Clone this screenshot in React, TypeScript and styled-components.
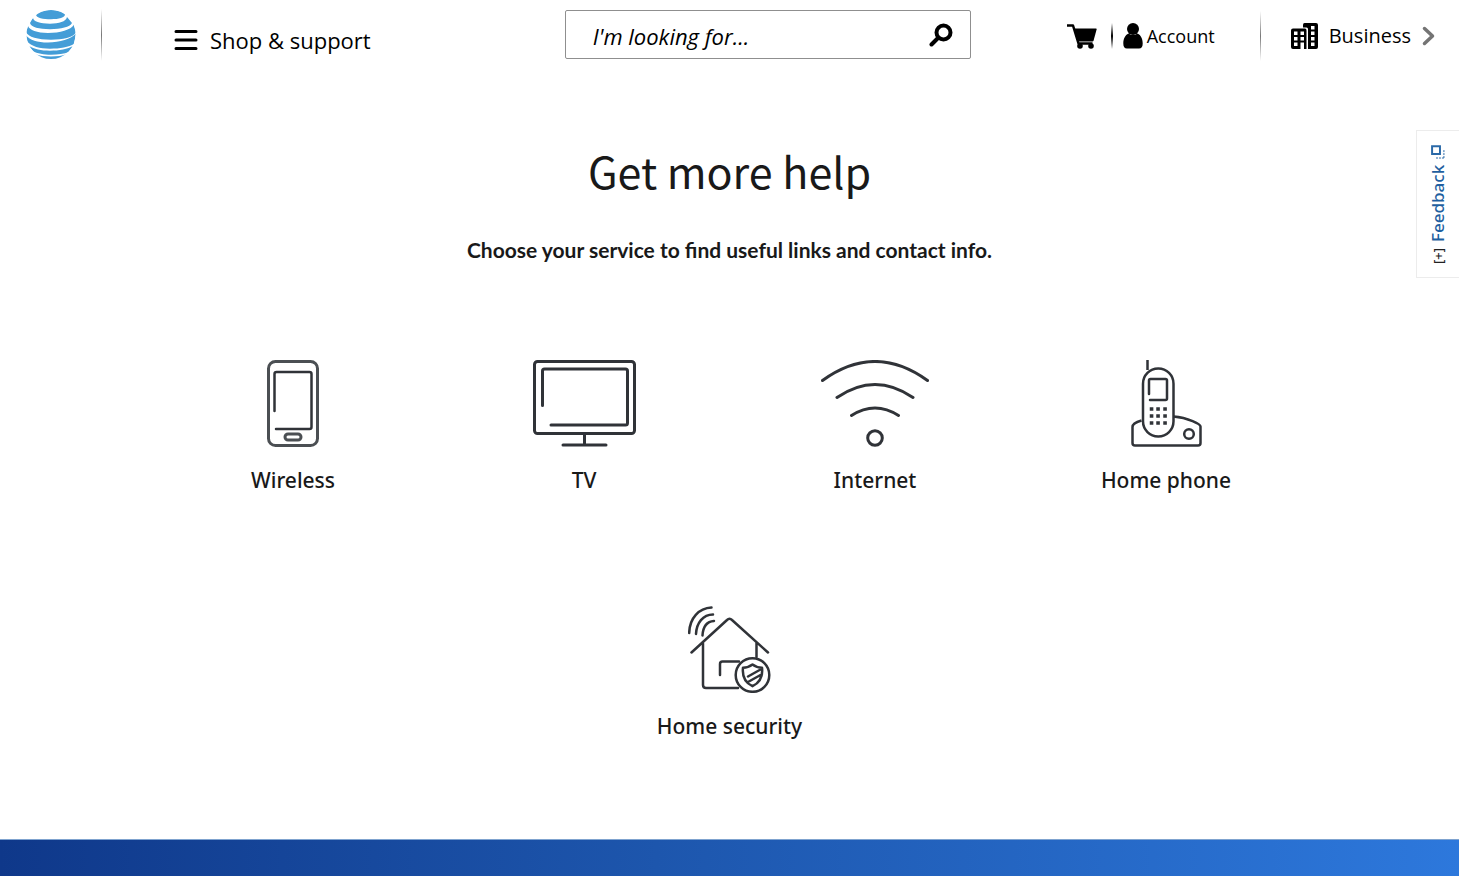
import React from "react";
import styled, { createGlobalStyle } from "styled-components";

const GlobalStyle = createGlobalStyle`
  *, *::before, *::after { box-sizing: border-box; }
  body {
    margin: 0;
    background: #fff;
    color: #191919;
    font-family: "Noto Sans", "Open Sans", sans-serif;
  }
`;

const Page = styled.div`
  position: relative;
  display: flex;
  flex-direction: column;
  min-height: 100vh;
  overflow: hidden;
`;

const Header = styled.header`
  display: flex;
  align-items: flex-start;
  height: 72px;
  padding: 10px 24px 0 26px;
  color: #000;
`;

const HeaderStart = styled.div`
  display: flex;
  flex: 1;
  align-items: center;
  height: 49px;
`;

const HeaderEnd = styled.div`
  display: flex;
  align-items: center;
  height: 52px;
  margin-left: 95px;
`;

const LogoLink = styled.a`
  display: flex;
  margin-right: 25px;
`;

const Divider = styled.span<{ $height: number; $width?: number; $color: string }>`
  width: ${(p) => p.$width ?? 1}px;
  height: ${(p) => p.$height}px;
  background: linear-gradient(transparent, ${(p) => p.$color} 50%, transparent);
`;

const MenuButton = styled.button`
  display: flex;
  align-items: center;
  gap: 12px;
  margin-left: 72px;
  padding: 10px 0 0;
  border: 0;
  background: none;
  color: inherit;
  font: 400 22px/32px "Open Sans", sans-serif;
  cursor: pointer;
`;

const SearchForm = styled.form`
  display: flex;
  align-items: center;
  flex: 0 1 406px;
  height: 49px;
  padding: 0 17px 0 27px;
  border: 1px solid #8f8f8f;
  border-radius: 2px;
`;

const SearchInput = styled.input`
  flex: 1;
  min-width: 0;
  padding: 2px 0 0;
  border: 0;
  outline: 0;
  background: none;
  color: #000;
  font: italic 400 22px/32px "Open Sans", sans-serif;

  &::placeholder { color: #000; opacity: 1; }
`;

const IconButton = styled.button`
  display: flex;
  padding: 0;
  border: 0;
  background: none;
  color: #000;
  cursor: pointer;
`;

const NavLink = styled.a<{ $size: number; $gap: number }>`
  display: flex;
  align-items: center;
  gap: ${(p) => p.$gap}px;
  color: #000;
  font-family: "Open Sans", sans-serif;
  font-size: ${(p) => p.$size}px;
  font-weight: 400;
  line-height: 28px;
  text-decoration: none;
  white-space: nowrap;
`;

const AccountGroup = styled.div`
  display: flex;
  align-items: center;
  gap: 10px;
  margin-right: 45px;
`;

const CartButton = styled(IconButton)`
  margin-right: 4px;
`;

const BusinessGroup = styled.div`
  margin-left: 30px;
`;

const Main = styled.main`
  flex: 1;
  padding-top: 66px;
  padding-bottom: 90px;
  text-align: center;
`;

const Title = styled.h1`
  margin: 0;
  font-family: "Noto Sans CJK JP", sans-serif;
  font-size: 43px;
  font-weight: 400;
  line-height: 64px;
`;

const Subtitle = styled.p`
  margin: 32px 0 0;
  font-family: Lato, sans-serif;
  font-size: 21px;
  font-weight: 700;
  line-height: 32px;
`;

const ServiceList = styled.ul`
  display: flex;
  flex-wrap: wrap;
  justify-content: center;
  row-gap: 110px;
  max-width: 1164px;
  margin: 94px auto 0;
  padding: 0;
  list-style: none;
`;

const ServiceItem = styled.li`
  flex: 0 0 25%;
`;

const ServiceLink = styled.a`
  display: flex;
  flex-direction: column;
  align-items: center;
  gap: 17px;
  color: #191919;
  font-size: 21px;
  font-weight: 500;
  line-height: 32px;
  text-decoration: none;
`;

const LineArt = styled.svg<{ $stroke?: number }>`
  display: block;
  height: 87px;
  fill: none;
  stroke: #303338;
  stroke-width: ${(p) => p.$stroke ?? 3};
  stroke-linecap: round;
  stroke-linejoin: round;
`;

const FeedbackTab = styled.button`
  position: absolute;
  top: 130px;
  right: 0;
  display: flex;
  align-items: center;
  gap: 6px;
  width: 43px;
  height: 148px;
  padding: 13px 0 14px;
  border: 1px solid #ececec;
  border-left: 0;
  background: #fff;
  color: #1f5fa0;
  font: 500 17px/24px "Noto Sans", sans-serif;
  writing-mode: vertical-rl;
  transform: rotate(180deg);
  cursor: pointer;
`;

const Plus = styled.span`
  color: #222;
  font-size: 13px;
`;

const FooterBand = styled.footer`
  height: 37px;
  border-top: 1px solid #7fa3cf;
  background: linear-gradient(90deg, #0f388a, #1d56ad 45%, #2d78dc);
`;

const Globe = () => (
  <svg width="50" height="50" viewBox="0 0 50 50" aria-hidden="true">
    <defs>
      <clipPath id="globe"><circle cx="25" cy="24.500" r="24.500" /></clipPath>
    </defs>
    <g clipPath="url(#globe)" fill="#449dd7">
      <path d="M10 4.500C13 1.500 19 0 25 0s12 1.500 14 4.500c0 3-6 4.700-14 4.700S10 8 10 4.500z" />
      <path d="M7 7.500c0 4 7 6.200 17 6.200 9 0 16-2 17-6.700l5 6c-2 4-11 6.200-22 6.200-11 0-19-2-20-6.200z" />
      <path d="M2 16c1.500 4 9 7 20 7 12 0 23-3 26-8.500l2 8c-3 5-13 7.200-25 7.200C12 29.700 2 27 0 22z" />
      <path d="M0 25.500c4 4.500 11 7 22 7 12 0 23-3.500 28-9l-2 10.500c-5 3-14 4.700-24 4.700C14 38.700 5 36.500 1 31z" />
      <path d="M3 36c5 3 12 4.700 21 4.700S42 39 47 36l-4 6c-5 1.800-11 2.700-18 2.700S11 43.500 7 41z" />
      <path d="M9 44c5 1.800 10 2.500 16 2.500s11-.7 16-2.500l-6 5H15z" />
    </g>
  </svg>
);

const MenuIcon = () => (
  <svg width="24" height="22" viewBox="0 0 24 22" stroke="#000" strokeWidth="3" strokeLinecap="round" aria-hidden="true">
    <path d="M2 2.500h20M2 11h20M2 19.500h20" />
  </svg>
);

const SearchIcon = () => (
  <svg width="24" height="24" viewBox="0 0 24 24" fill="none" stroke="#000" strokeLinecap="round" aria-hidden="true">
    <circle cx="14.500" cy="9.500" r="7" strokeWidth="4" />
    <path d="M9 15l-6.500 6.500" strokeWidth="4" />
  </svg>
);

const CartIcon = () => (
  <svg width="31" height="25" viewBox="0 0 31 25" aria-hidden="true">
    <path d="M1 1.500h6l5.500 18h14" fill="none" stroke="#000" strokeWidth="2.500" strokeLinejoin="round" />
    <path d="M7.500 4.500H30q.8 0 .6 1l-3 11q-.3 1-1.200 1H12z" />
    <circle cx="14" cy="22" r="2.800" />
    <circle cx="25" cy="22" r="2.800" />
  </svg>
);

const PersonIcon = () => (
  <svg width="20" height="26" viewBox="0 0 20 26" aria-hidden="true">
    <circle cx="10" cy="6" r="6" />
    <path d="M5.500 10.500C2 12 .3 16 .3 20.500.3 24 1.500 25.500 4 25.500h12c2.500 0 3.700-1.500 3.700-5 0-4.500-1.700-8.500-5.200-10q-4.500 3-9 0z" />
  </svg>
);

const BuildingIcon = () => (
  <svg width="27" height="26" viewBox="0 0 27 26" aria-hidden="true">
    <path d="M13.500 0H25q2 0 2 2v22q0 2-2 2h-8V6q0-1.500-1.500-1.500H12V2q0-2 1.500-2z" />
    <path d="M2 5.500h12q1.500 0 1.500 2V26H13v-6.500H9.500V26H2q-2 0-2-2V7.500q0-2 2-2z" />
    <path
      fill="#fff"
      d="M3 8.500h3.500V12H3zM9.500 8.500H13V12H9.500zM3 14h3.500v3.500H3zM9.500 14H13v3.500H9.500zM3 19.500h3.500V23H3zM20 3h3.500v3.500H20zM20 8.500h3.500V12H20zM20 14h3.500v3.500H20zM20 19.500h3.500V23H20z"
    />
  </svg>
);

const ChevronIcon = () => (
  <svg width="13" height="20" viewBox="0 0 13 20" fill="none" stroke="#747474" strokeWidth="3.500" strokeLinecap="round" strokeLinejoin="round" aria-hidden="true">
    <path d="M2.500 2.500L10.500 10l-8 7.500" />
  </svg>
);

const WindowIcon = () => (
  <svg width="14" height="14" viewBox="0 0 14 14" fill="none" stroke="#2a69a8" aria-hidden="true">
    <path d="M5 5h8v8H5z" strokeWidth="2" />
    <path d="M1 1v9M1 1h9" strokeDasharray="2 1" />
  </svg>
);

const MobileArt = () => (
  <LineArt width="52" viewBox="0 0 52 87" aria-hidden="true">
    <rect x="1.500" y="1.500" width="49" height="84" rx="7" stroke="#4b4f53" />
    <path d="M7.500 51V14q0-2 2-2h33q2 0 2 2v53q0 2-2 2H9" strokeWidth="2.500" />
    <rect x="18" y="74" width="16" height="6" rx="3" stroke="#4b4f53" />
  </LineArt>
);

const TvArt = () => (
  <LineArt width="103" viewBox="0 0 103 87" aria-hidden="true">
    <rect x="1.500" y="1.500" width="100" height="72" rx="3" />
    <path d="M9.500 45.500V11q0-2 2-2h81q2 0 2 2v52q0 2-2 2H18M51.500 74v11M30 85h43" />
  </LineArt>
);

const WifiArt = () => (
  <LineArt width="108" viewBox="0 0 108 87" aria-hidden="true">
    <path d="M1.500 20.500Q54-17.500 106.500 20.500M16 37.500Q54 11.500 92 37.500M30.500 55.500Q54 40.500 77.500 55.500" />
    <circle cx="54" cy="78" r="7.300" />
  </LineArt>
);

const HandsetArt = () => (
  <LineArt $stroke={2.5} width="71" viewBox="0 0 71 87" aria-hidden="true">
    <path d="M16.500 0v10M10.500 60.500C5 62 1.500 63.500 1.500 67v16q0 2.500 2.500 2.500h63q2.500 0 2.500-2.500V66.500c0-2-12-9-27-10" strokeLinecap="butt" />
    <rect x="12" y="8.500" width="30.500" height="68" rx="15.200" />
    <path d="M18 34V20.500q0-1.500 1.500-1.500h15q1.500 0 1.500 1.500v18q0 1.500-1.500 1.500H19" />
    <path d="M20.500 49h.1M27 49h.1M34 49h.1M20.500 56h.1M27 56h.1M34 56h.1M20.500 63h.1M27 63h.1M34 63h.1" strokeWidth="3.500" strokeLinecap="square" />
    <circle cx="58" cy="74" r="4.800" />
  </LineArt>
);

const HouseArt = () => (
  <LineArt $stroke={2.5} width="83" viewBox="0 0 83 87" aria-hidden="true">
    <path d="M1.200 27C1.500 12 11 2 23.500 1.500M8 28C8.500 17 15 8.500 25 8.500M14.500 29.500C15 21 19 15.500 26 15" />
    <path d="M3.500 46.500L39 14q2.500-2.500 5 0l36 32.500M15 37.500V79q0 3 3 3h32M68.500 37v14M32 69V58q0-2.500 2.500-2.500H51" />
    <circle cx="64.500" cy="69" r="16.800" fill="#fff" />
    <path d="M64.500 58.500c3 2.300 6 3.200 9.500 3.200 1 9-2 15-9.500 18.500C57 76.700 54 70.700 55 61.700c3.500 0 6.500-.9 9.500-3.200zM60 70.500l12.500-7M60 76l12.500-7" />
  </LineArt>
);

const services = [
  { label: "Wireless", art: <MobileArt /> },
  { label: "TV", art: <TvArt /> },
  { label: "Internet", art: <WifiArt /> },
  { label: "Home phone", art: <HandsetArt /> },
  { label: "Home security", art: <HouseArt /> },
];

export default function App() {
  return (
    <Page>
      <GlobalStyle />
      <Header>
        <HeaderStart>
          <LogoLink href="#" aria-label="Home"><Globe /></LogoLink>
          <Divider $height={52} $color="#777" />
          <MenuButton type="button"><MenuIcon />Shop &amp; support</MenuButton>
        </HeaderStart>
        <SearchForm role="search" onSubmit={(e) => e.preventDefault()}>
          <SearchInput type="text" aria-label="Search" placeholder="I'm looking for..." />
          <IconButton type="submit" aria-label="Submit search"><SearchIcon /></IconButton>
        </SearchForm>
        <HeaderEnd>
          <AccountGroup>
            <CartButton type="button" aria-label="Cart"><CartIcon /></CartButton>
            <Divider $height={26} $width={2} $color="#000" />
            <NavLink href="#" $size={18} $gap={4}><PersonIcon />Account</NavLink>
          </AccountGroup>
          <Divider $height={50} $color="#777" />
          <BusinessGroup>
            <NavLink href="#" $size={20} $gap={11}><BuildingIcon />Business<ChevronIcon /></NavLink>
          </BusinessGroup>
        </HeaderEnd>
      </Header>
      <Main>
        <Title>Get more help</Title>
        <Subtitle>Choose your service to find useful links and contact info.</Subtitle>
        <ServiceList>
          {services.map((s) => (
            <ServiceItem key={s.label}>
              <ServiceLink href="#">{s.art}{s.label}</ServiceLink>
            </ServiceItem>
          ))}
        </ServiceList>
      </Main>
      <FeedbackTab type="button"><Plus>[+]</Plus>Feedback<WindowIcon /></FeedbackTab>
      <FooterBand />
    </Page>
  );
}
